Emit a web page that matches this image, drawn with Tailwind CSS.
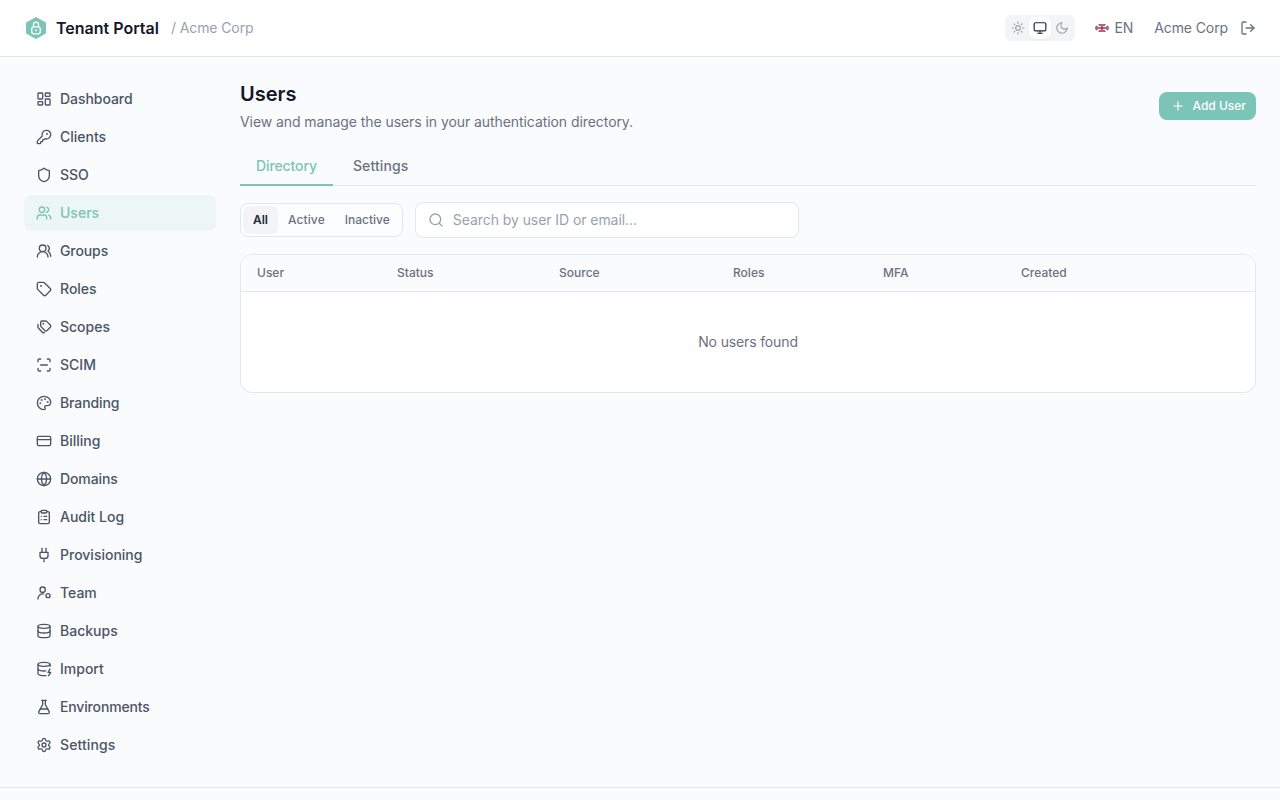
<!DOCTYPE html>
<html lang="en">
<head>
  <meta charset="UTF-8" />
  <meta name="viewport" content="width=device-width, initial-scale=1.0"/>
  <title>Tenant Portal</title>
  <script src="https://cdn.jsdelivr.net/npm/@tailwindcss/browser@4"></script>
</head>
<body class="h-screen overflow-hidden flex flex-col bg-[#f9fbfd] font-['Inter',sans-serif] text-gray-900">
  <!-- Top bar -->
  <header class="h-[57px] shrink-0 bg-white border-b border-[#e3e6ea] flex items-center justify-between pl-[25px] pr-6">
    <div class="flex items-center">
      <svg class="w-[22px] h-[24px]" viewBox="0 0 22 24">
        <path d="M11 1 20.500 6.300a1 1 0 0 1 .5.9v9.600a1 1 0 0 1-.5.9L11 23 1.500 17.700a1 1 0 0 1-.5-.9V7.200a1 1 0 0 1 .5-.9z" fill="#7cc4b8"/>
        <rect x="6.800" y="10.800" width="8.400" height="7" rx="2" fill="none" stroke="#fff" stroke-width="1.300"/>
        <path d="M8.500 10.800V8.600a2.500 2.500 0 0 1 5 0v2.200" fill="none" stroke="#fff" stroke-width="1.300"/>
        <circle cx="11" cy="14.300" r="1" fill="#fff"/>
      </svg>
      <span class="ml-[9px] text-base font-semibold text-[#111827]">Tenant Portal</span>
      <span class="ml-3 text-sm tracking-[-0.1px] text-gray-400">/ Acme Corp</span>
    </div>
    <div class="flex items-center">
      <div class="flex items-center h-[26px] bg-gray-100 rounded-md px-[2px] text-gray-400">
        <span class="w-[22px] h-[22px] flex items-center justify-center">
          <svg class="w-[14px] h-[14px]" viewBox="0 0 24 24" fill="none" stroke="currentColor" stroke-width="2" stroke-linecap="round" stroke-linejoin="round"><circle cx="12" cy="12" r="4"/><path d="M12 2v2"/><path d="M12 20v2"/><path d="m4.930 4.930 1.410 1.410"/><path d="m17.660 17.660 1.410 1.410"/><path d="M2 12h2"/><path d="M20 12h2"/><path d="m6.340 17.660-1.410 1.410"/><path d="m19.070 4.930-1.410 1.410"/></svg>
        </span>
        <span class="w-[22px] h-[22px] flex items-center justify-center bg-white rounded-md text-gray-800 shadow-xs">
          <svg class="w-[14px] h-[14px]" viewBox="0 0 24 24" fill="none" stroke="currentColor" stroke-width="2" stroke-linecap="round" stroke-linejoin="round"><rect width="20" height="14" x="2" y="3" rx="2"/><line x1="8" x2="16" y1="21" y2="21"/><line x1="12" x2="12" y1="17" y2="21"/></svg>
        </span>
        <span class="w-[22px] h-[22px] flex items-center justify-center">
          <svg class="w-[14px] h-[14px]" viewBox="0 0 24 24" fill="none" stroke="currentColor" stroke-width="2" stroke-linecap="round" stroke-linejoin="round"><path d="M12 3a6 6 0 0 0 9 9 9 9 0 1 1-9-9Z"/></svg>
        </span>
      </div>
      <svg class="ml-5 w-[14px] h-[8px] rounded-[50%]" viewBox="0 0 14 8">
        <rect width="14" height="8" fill="#2b3a7e"/>
        <path d="M0 0 14 8M14 0 0 8" stroke="#fff" stroke-width="1.600"/>
        <path d="M7 0v8M0 4h14" stroke="#fff" stroke-width="2.600"/>
        <path d="M7 0v8M0 4h14" stroke="#c8243c" stroke-width="1.500"/>
      </svg>
      <span class="ml-[6px] text-sm tracking-[-0.2px] text-gray-500">EN</span>
      <span class="ml-[21px] text-sm tracking-[-0.1px] text-gray-500">Acme Corp</span>
      <svg class="ml-3 w-4 h-4 text-gray-500" viewBox="0 0 24 24" fill="none" stroke="currentColor" stroke-width="2" stroke-linecap="round" stroke-linejoin="round"><path d="m16 17 5-5-5-5"/><path d="M21 12H9"/><path d="M9 21H5a2 2 0 0 1-2-2V5a2 2 0 0 1 2-2h4"/></svg>
    </div>
  </header>

  <div class="flex-1 flex min-h-0">
    <!-- Sidebar -->
    <nav class="w-[240px] shrink-0 pl-6 pr-6 pt-6 flex flex-col gap-[2px] text-sm font-medium text-gray-600">
      <a class="h-9 flex items-center gap-2 px-3 rounded-lg tracking-[-0.05px]">
        <svg class="w-4 h-4" viewBox="0 0 24 24" fill="none" stroke="currentColor" stroke-width="2" stroke-linecap="round" stroke-linejoin="round"><rect width="7" height="9" x="3" y="3" rx="1"/><rect width="7" height="5" x="14" y="3" rx="1"/><rect width="7" height="9" x="14" y="12" rx="1"/><rect width="7" height="5" x="3" y="16" rx="1"/></svg>
        Dashboard
      </a>
      <a class="h-9 flex items-center gap-2 px-3 rounded-lg">
        <svg class="w-4 h-4" viewBox="0 0 24 24" fill="none" stroke="currentColor" stroke-width="2" stroke-linecap="round" stroke-linejoin="round"><path d="M2.586 17.414A2 2 0 0 0 2 18.828V21a1 1 0 0 0 1 1h3a1 1 0 0 0 1-1v-1a1 1 0 0 1 1-1h1a1 1 0 0 0 1-1v-1a1 1 0 0 1 1-1h.172a2 2 0 0 0 1.414-.586l.814-.814a6.500 6.500 0 1 0-4-4z"/><circle cx="16.500" cy="7.500" r=".5" fill="currentColor"/></svg>
        Clients
      </a>
      <a class="h-9 flex items-center gap-2 px-3 rounded-lg">
        <svg class="w-4 h-4" viewBox="0 0 24 24" fill="none" stroke="currentColor" stroke-width="2" stroke-linecap="round" stroke-linejoin="round"><path d="M20 13c0 5-3.500 7.500-7.660 8.950a1 1 0 0 1-.67-.01C7.500 20.500 4 18 4 13V6a1 1 0 0 1 1-1c2 0 4.500-1.200 6.240-2.720a1.170 1.170 0 0 1 1.520 0C14.510 3.810 17 5 19 5a1 1 0 0 1 1 1z"/></svg>
        SSO
      </a>
      <a class="h-9 flex items-center gap-2 px-3 rounded-lg bg-[#ecf6f4] text-[#7cc4b8]">
        <svg class="w-4 h-4" viewBox="0 0 24 24" fill="none" stroke="currentColor" stroke-width="2" stroke-linecap="round" stroke-linejoin="round"><path d="M16 21v-2a4 4 0 0 0-4-4H6a4 4 0 0 0-4 4v2"/><circle cx="9" cy="7" r="4"/><path d="M22 21v-2a4 4 0 0 0-3-3.870"/><path d="M16 3.130a4 4 0 0 1 0 7.750"/></svg>
        Users
      </a>
      <a class="h-9 flex items-center gap-2 px-3 rounded-lg tracking-[-0.1px]">
        <svg class="w-4 h-4" viewBox="0 0 24 24" fill="none" stroke="currentColor" stroke-width="2" stroke-linecap="round" stroke-linejoin="round"><path d="M18 21a8 8 0 0 0-16 0"/><circle cx="10" cy="8" r="5"/><path d="M22 20c0-3.370-2-6.500-4-8a5 5 0 0 0-.45-8.300"/></svg>
        Groups
      </a>
      <a class="h-9 flex items-center gap-2 px-3 rounded-lg">
        <svg class="w-4 h-4" viewBox="0 0 24 24" fill="none" stroke="currentColor" stroke-width="2" stroke-linecap="round" stroke-linejoin="round"><path d="M12.586 2.586A2 2 0 0 0 11.172 2H4a2 2 0 0 0-2 2v7.172a2 2 0 0 0 .586 1.414l8.704 8.704a2.426 2.426 0 0 0 3.420 0l6.580-6.580a2.426 2.426 0 0 0 0-3.420z"/><circle cx="7.500" cy="7.500" r=".5" fill="currentColor"/></svg>
        Roles
      </a>
      <a class="h-9 flex items-center gap-2 px-3 rounded-lg">
        <svg class="w-4 h-4" viewBox="0 0 24 24" fill="none" stroke="currentColor" stroke-width="2" stroke-linecap="round" stroke-linejoin="round"><path d="M9 3h5.500a2 2 0 0 1 1.400.6l5.500 5.500a2.400 2.400 0 0 1 0 3.400l-4.800 4.800a2.400 2.400 0 0 1-3.400 0L7.600 11.400a2 2 0 0 1-.6-1.400V5a2 2 0 0 1 2-2z"/><path d="M3 8v4.200a2 2 0 0 0 .6 1.400l5.800 6.200a2.400 2.400 0 0 0 3.400.2"/><circle cx="11" cy="7" r=".5" fill="currentColor"/></svg>
        Scopes
      </a>
      <a class="h-9 flex items-center gap-2 px-3 rounded-lg">
        <svg class="w-4 h-4" viewBox="0 0 24 24" fill="none" stroke="currentColor" stroke-width="2" stroke-linecap="round" stroke-linejoin="round"><path d="M3 7V5a2 2 0 0 1 2-2h2"/><path d="M17 3h2a2 2 0 0 1 2 2v2"/><path d="M21 17v2a2 2 0 0 1-2 2h-2"/><path d="M7 21H5a2 2 0 0 1-2-2v-2"/><path d="M7 12h10"/></svg>
        SCIM
      </a>
      <a class="h-9 flex items-center gap-2 px-3 rounded-lg tracking-[-0.1px]">
        <svg class="w-4 h-4" viewBox="0 0 24 24" fill="none" stroke="currentColor" stroke-width="2" stroke-linecap="round" stroke-linejoin="round"><path d="M12 22a1 1 0 0 1 0-20 10 9 0 0 1 10 9 5 5 0 0 1-5 5h-2.250a1.750 1.750 0 0 0-1.400 2.800l.3.4a1.750 1.750 0 0 1-1.400 2.800z"/><circle cx="13.500" cy="6.500" r=".5" fill="currentColor"/><circle cx="17.500" cy="10.500" r=".5" fill="currentColor"/><circle cx="6.500" cy="12.500" r=".5" fill="currentColor"/><circle cx="8.500" cy="7.500" r=".5" fill="currentColor"/></svg>
        Branding
      </a>
      <a class="h-9 flex items-center gap-2 px-3 rounded-lg">
        <svg class="w-4 h-4" viewBox="0 0 24 24" fill="none" stroke="currentColor" stroke-width="2" stroke-linecap="round" stroke-linejoin="round"><rect width="20" height="14" x="2" y="5" rx="2"/><line x1="2" x2="22" y1="10" y2="10"/></svg>
        Billing
      </a>
      <a class="h-9 flex items-center gap-2 px-3 rounded-lg tracking-[-0.1px]">
        <svg class="w-4 h-4" viewBox="0 0 24 24" fill="none" stroke="currentColor" stroke-width="2" stroke-linecap="round" stroke-linejoin="round"><circle cx="12" cy="12" r="10"/><path d="M12 2a14.500 14.500 0 0 0 0 20 14.500 14.500 0 0 0 0-20"/><path d="M2 12h20"/></svg>
        Domains
      </a>
      <a class="h-9 flex items-center gap-2 px-3 rounded-lg">
        <svg class="w-4 h-4" viewBox="0 0 24 24" fill="none" stroke="currentColor" stroke-width="2" stroke-linecap="round" stroke-linejoin="round"><rect width="8" height="4" x="8" y="2" rx="1"/><path d="M16 4h2a2 2 0 0 1 2 2v14a2 2 0 0 1-2 2H6a2 2 0 0 1-2-2V6a2 2 0 0 1 2-2h2"/><path d="M12 11h4"/><path d="M12 16h4"/><path d="M8 11h.01"/><path d="M8 16h.01"/></svg>
        Audit Log
      </a>
      <a class="h-9 flex items-center gap-2 px-3 rounded-lg">
        <svg class="w-4 h-4" viewBox="0 0 24 24" fill="none" stroke="currentColor" stroke-width="2" stroke-linecap="round" stroke-linejoin="round"><path d="M12 22v-5"/><path d="M9 8V2"/><path d="M15 8V2"/><path d="M18 8v5a4 4 0 0 1-4 4h-4a4 4 0 0 1-4-4V8Z"/></svg>
        Provisioning
      </a>
      <a class="h-9 flex items-center gap-2 px-3 rounded-lg">
        <svg class="w-4 h-4" viewBox="0 0 24 24" fill="none" stroke="currentColor" stroke-width="2" stroke-linecap="round" stroke-linejoin="round"><circle cx="10" cy="7" r="4"/><path d="M3 21v-1a7 7 0 0 1 8-6.500"/><circle cx="18" cy="16" r="3"/></svg>
        Team
      </a>
      <a class="h-9 flex items-center gap-2 px-3 rounded-lg">
        <svg class="w-4 h-4" viewBox="0 0 24 24" fill="none" stroke="currentColor" stroke-width="2" stroke-linecap="round" stroke-linejoin="round"><ellipse cx="12" cy="5" rx="9" ry="3"/><path d="M3 5V19A9 3 0 0 0 21 19V5"/><path d="M3 12A9 3 0 0 0 21 12"/></svg>
        Backups
      </a>
      <a class="h-9 flex items-center gap-2 px-3 rounded-lg">
        <svg class="w-4 h-4" viewBox="0 0 24 24" fill="none" stroke="currentColor" stroke-width="2" stroke-linecap="round" stroke-linejoin="round"><ellipse cx="12" cy="5" rx="9" ry="3"/><path d="M3 5V19A9 3 0 0 0 15 21.840"/><path d="M21 5V8"/><path d="M21 12L18 17H22L19 22"/><path d="M3 12A9 3 0 0 0 14.590 14.870"/></svg>
        Import
      </a>
      <a class="h-9 flex items-center gap-2 px-3 rounded-lg tracking-[-0.15px]">
        <svg class="w-4 h-4" viewBox="0 0 24 24" fill="none" stroke="currentColor" stroke-width="2" stroke-linecap="round" stroke-linejoin="round"><path d="M14 2v6a2 2 0 0 0 .245.960l5.510 10.080A2 2 0 0 1 18 22H6a2 2 0 0 1-1.755-2.960l5.510-10.080A2 2 0 0 0 10 8V2"/><path d="M6.453 15h11.094"/><path d="M8.500 2h7"/></svg>
        Environments
      </a>
      <a class="h-9 flex items-center gap-2 px-3 rounded-lg tracking-[0.1px]">
        <svg class="w-4 h-4" viewBox="0 0 24 24" fill="none" stroke="currentColor" stroke-width="2" stroke-linecap="round" stroke-linejoin="round"><path d="M9.671 4.136a2.340 2.340 0 0 1 4.659 0 2.340 2.340 0 0 0 3.319 1.915 2.340 2.340 0 0 1 2.330 4.033 2.340 2.340 0 0 0 0 3.831 2.340 2.340 0 0 1-2.330 4.033 2.340 2.340 0 0 0-3.319 1.915 2.340 2.340 0 0 1-4.659 0 2.340 2.340 0 0 0-3.320-1.915 2.340 2.340 0 0 1-2.330-4.033 2.340 2.340 0 0 0 0-3.831A2.340 2.340 0 0 1 6.350 6.051a2.340 2.340 0 0 0 3.319-1.915"/><circle cx="12" cy="12" r="3"/></svg>
        Settings
      </a>
    </nav>

    <!-- Main -->
    <main class="flex-1 min-w-0 pr-6 pt-[23px]">
      <div class="flex items-start justify-between">
        <div>
          <h1 class="text-xl font-semibold leading-7 text-[#111827]">Users</h1>
          <p class="mt-1 text-sm leading-5 tracking-[-0.07px] text-gray-500">View and manage the users in your authentication directory.</p>
        </div>
        <button class="mt-3 h-7 pl-3 pr-[10px] flex items-center gap-2 bg-[#7cc4b8] text-white text-xs font-medium rounded-lg">
          <svg class="w-[14px] h-[14px]" viewBox="0 0 24 24" fill="none" stroke="currentColor" stroke-width="2" stroke-linecap="round" stroke-linejoin="round"><path d="M5 12h14"/><path d="M12 5v14"/></svg>
          Add User
        </button>
      </div>

      <!-- Tabs: the active underline sits over the row's bottom border -->
      <div class="mt-4 h-[38px] flex border-b border-[#e3e6ea] text-sm font-medium">
        <span class="h-[38px] shrink-0 px-4 pb-px flex items-center border-b-2 border-[#7cc4b8] tracking-[-0.1px] text-[#7cc4b8]">Directory</span>
        <span class="h-[38px] shrink-0 ml-1 px-4 pb-px flex items-center border-b-2 border-transparent tracking-[0.1px] text-gray-500">Settings</span>
      </div>

      <div class="mt-4 flex items-center gap-3">
        <div class="h-[34px] flex items-center bg-white/50 border border-[#e3e6ea] rounded-lg p-[2px] text-xs font-medium text-gray-500">
          <span class="h-7 px-[10px] flex items-center bg-gray-100 rounded-md font-semibold text-gray-800">All</span>
          <span class="h-7 px-[10px] flex items-center tracking-[0.1px]">Active</span>
          <span class="h-7 px-[10px] flex items-center">Inactive</span>
        </div>
        <div class="w-[384px] h-9 flex items-center gap-[9px] px-3 bg-white border border-[#e3e6ea] rounded-lg">
          <svg class="w-4 h-4 text-gray-400" viewBox="0 0 24 24" fill="none" stroke="currentColor" stroke-width="2" stroke-linecap="round" stroke-linejoin="round"><path d="m21 21-4.340-4.340"/><circle cx="11" cy="11" r="8"/></svg>
          <span class="text-sm tracking-[-0.07px] text-gray-400">Search by user ID or email...</span>
        </div>
      </div>

      <div class="mt-4 bg-white border border-[#e3e6ea] rounded-xl overflow-hidden">
        <div class="h-[37px] flex items-center bg-[#fafbfd] border-b border-[#e3e6ea] text-xs font-medium text-gray-500">
          <span class="w-[140px] pl-4">User</span>
          <span class="w-[162px] pl-4">Status</span>
          <span class="w-[174px] pl-4">Source</span>
          <span class="w-[150px] pl-4">Roles</span>
          <span class="w-[138px] pl-4">MFA</span>
          <span class="pl-4">Created</span>
        </div>
        <div class="h-[100px] flex items-center justify-center text-sm tracking-[-0.14px] text-gray-500">No users found</div>
      </div>
    </main>
  </div>

  <footer class="h-[13px] shrink-0 border-t border-[#e3e6ea]"></footer>
</body>
</html>
